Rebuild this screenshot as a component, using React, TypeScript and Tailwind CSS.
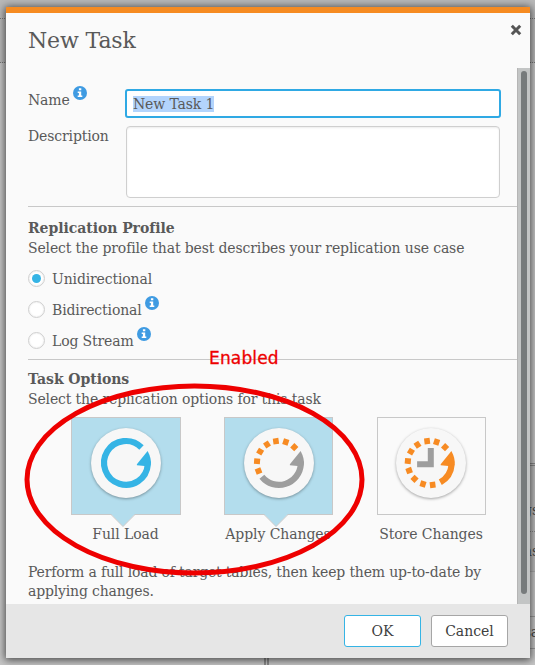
import React from "react";

const INFO_BLUE = "#3f9be2";

function InfoIcon() {
  return (
    <svg width="14" height="14" viewBox="0 0 14 14" className="shrink-0">
      <circle cx="7" cy="7" r="7" fill={INFO_BLUE} />
      <path d="M5.9 2.2h2.4v2H5.9zM4.7 5.4h3.5v4.2h1.1v1.5H4.7V9.6h1.2V6.9H4.7z" fill="#fff" />
    </svg>
  );
}

function Radio({ label, checked, info }: { label: string; checked?: boolean; info?: boolean }) {
  return (
    <div className="flex h-[31px] items-center">
      <span className="flex h-[17px] w-[17px] shrink-0 items-center justify-center rounded-full border border-[#cfcfcf] bg-white shadow-[inset_0_0_2px_rgba(0,0,0,0.12)]">
        {checked && <span className="h-[9px] w-[9px] rounded-full bg-[#35b4e5]" />}
      </span>
      <span className="ml-[7px] leading-[18px]">{label}</span>
      {info && (
        <span className="mb-[13px] ml-[3.5px]">
          <InfoIcon />
        </span>
      )}
    </div>
  );
}

function Dots({ angles }: { angles: number[] }) {
  return (
    <g fill="#f78b23">
      {angles.map((a) => (
        <rect key={a} x="19" y="-2.8" width="6" height="5.6" transform={`rotate(${a})`} />
      ))}
    </g>
  );
}

const ARROW = "M21.6 -11.9L10.9 1.2V2.3L18.6 2.9L24.9 2Q25.6 -4.5 21.6 -11.9Z";

function Disc({ children }: { children: React.ReactNode }) {
  return (
    <span className="flex h-[70px] w-[70px] items-center justify-center rounded-full bg-[#f7f7f7] shadow-[0_1px_3px_rgba(0,0,0,0.35)]">
      <svg width="60" height="60" viewBox="-30 -30 60 60">
        {children}
      </svg>
    </span>
  );
}

function FullLoadIcon() {
  return (
    <Disc>
      <path d="M15.5 -15.5A21.9 21.9 0 1 0 21.8 1.5" fill="none" stroke="#35b4e5" strokeWidth="6.2" />
      <path d={ARROW} fill="#35b4e5" />
    </Disc>
  );
}

function ApplyIcon() {
  return (
    <Disc>
      <Dots angles={[158.5, 184.5, 211, 237, 262, 288, 314]} />
      <path d="M-17.1 13.7A21.9 21.9 0 0 0 21.8 1.5" fill="none" stroke="#9e9e9e" strokeWidth="6.2" />
      <path d={ARROW} fill="#9e9e9e" />
    </Disc>
  );
}

function StoreIcon() {
  return (
    <Disc>
      <g transform="translate(-1.2 0)">
        <Dots angles={[-46, -72, -97, -124, -149, -175, 160, 134, 108, 82.5]} />
        <path d="M10.5 19.2A21.9 21.9 0 0 0 21.8 1.5" fill="none" stroke="#f78b23" strokeWidth="6.2" />
        <path d={ARROW} fill="#f78b23" />
        <path d="M-2 -15H4V4.3H-12.7V-1.7H-2Z" fill="#9e9e9e" />
      </g>
    </Disc>
  );
}

function Tile({ label, active, children }: { label: string; active?: boolean; children: React.ReactNode }) {
  return (
    <div className="flex w-[109px] flex-col items-center first:w-[110px] last:ml-px">
      <div
        className={
          "relative flex h-[98px] w-full justify-center border border-[#c8c8c8] pt-[10px] " +
          (active ? "bg-[#b3dded]" : "bg-[#fafafa] pr-px")
        }
      >
        {children}
        {active && (
          <svg className="absolute left-[38px] top-[96px]" width="26" height="14" viewBox="0 0 26 14">
            <path d="M1 0L13 12.5L25 0Z" fill="#b3dded" />
            <path d="M1 .5L13 12.5L25 .5" fill="none" stroke="#c8c8c8" />
          </svg>
        )}
      </div>
      <span className="mr-px mt-[10px] whitespace-nowrap leading-[18px] tracking-[-0.08px]">{label}</span>
    </div>
  );
}

/* Page behind the modal, dimmed */
function Backdrop() {
  return (
    <div className="absolute inset-0 flex flex-col overflow-hidden bg-[#c6c6c6] text-[#4a4a4a]">
      <div className="h-[19px] shrink-0 border-b border-dotted border-[#777] bg-[#b9b9b9]" />
      <div className="h-[44px] shrink-0 border-b border-dotted border-[#777] bg-[#b9b9b9]" />
      <div className="h-[400px] shrink-0" />
      <div className="ml-auto flex w-[271px] grow flex-col border-l-[5px] border-double border-[#8a8a8a]">
        <div className="flex h-[69px] items-end justify-end border-b border-dotted border-[#888] bg-[#bdbdbd] pb-[10px] [border-top:3px_double_#898989]">
          <span className="-mr-[4px]">gs</span>
        </div>
        <div className="flex h-[40px] items-center justify-end border-b border-[#aaa] bg-[#bdbdbd]">
          <span className="-mr-[4px]">ns</span>
        </div>
        <div className="h-[44px]" />
        <div className="flex h-[33px] items-center justify-end border-y border-[#999]">
          <span className="-mr-[4px]">sa</span>
        </div>
      </div>
    </div>
  );
}

export default function App() {
  return (
    <div className="relative h-[665px] w-[535px] overflow-hidden font-['DejaVu_Serif',serif] text-[14px] tracking-[-0.135px] text-[#595959]">
      <Backdrop />
      <div className="relative ml-[6px] pt-[7px]">
        <div className="flex h-[651px] w-[524px] flex-col border-t-[6px] border-[#f68b21] bg-[#fafafa] shadow-[0_1px_8px_1px_rgba(0,0,0,0.65)]">
          <header className="flex h-[55px] shrink-0 items-start justify-between pl-[22px] pr-[8px]">
            <h1 className="mt-[13px] text-[22px] leading-[30px]">New Task</h1>
            <svg className="mt-[11px]" width="12" height="12" viewBox="0 0 12 12">
              <path d="M1.8 1.8L10.2 10.2M10.2 1.8L1.8 10.2" stroke="#555" strokeWidth="3" />
            </svg>
          </header>

          <div className="flex h-[536px] shrink-0">
            <main className="w-[511px] pl-[22px]">
              <div className="flex pt-[21px]">
                <label className="flex h-[22px] w-[97px] items-start">
                  <span className="mt-[1px] leading-[20px]">Name</span>
                  <span className="-mt-[3px] ml-[3.5px]">
                    <InfoIcon />
                  </span>
                </label>
                <div className="flex h-[29px] w-[376px] items-center rounded-[3px] border-2 border-[#2fa9e4] bg-white pl-[6px]">
                  <span className="bg-[#b3d4fc] leading-[16px]">New Task 1</span>
                </div>
              </div>
              <div className="flex pt-[8px]">
                <label className="w-[98px] leading-[20px]">Description</label>
                <div className="h-[72px] w-[374px] rounded-[4px] border border-[#cfcfcf] bg-white shadow-[inset_0_1px_2px_rgba(0,0,0,0.08)]" />
              </div>

              <section className="mt-[8px] border-t border-[#c8c8c8] pt-[12px]">
                <h2 className="font-bold leading-[18px] tracking-[-0.05px]">Replication Profile</h2>
                <p className="mt-px leading-[20px]">
                  Select the profile that best describes your replication use case
                </p>
                <div className="pt-[5px]">
                  <Radio label="Unidirectional" checked />
                  <Radio label="Bidirectional" info />
                  <Radio label="Log Stream" info />
                </div>
              </section>

              <section className="mt-[3px] border-t border-[#c8c8c8] pt-[9px]">
                <h2 className="font-bold leading-[20px] tracking-[-0.05px]">Task Options</h2>
                <p className="leading-[20px]">Select the replication options for this task</p>
                <div className="flex gap-[43px] pl-[43px] pt-[8px]">
                  <Tile label="Full Load" active>
                    <FullLoadIcon />
                  </Tile>
                  <Tile label="Apply Changes" active>
                    <ApplyIcon />
                  </Tile>
                  <Tile label="Store Changes">
                    <StoreIcon />
                  </Tile>
                </div>
                <p className="mt-[20px] leading-[19px] tracking-[-0.17px]">
                  Perform a full load of target tables, then keep them up-to-date by
                  <br />
                  applying changes.
                </p>
              </section>
            </main>
            <div className="flex w-[13px] justify-center border-l border-[#b5b5b5] bg-[#c3c5c5] pt-[3px]">
              <div className="mr-px h-[523px] w-[6px] rounded-full bg-[#777b7c]" />
            </div>
          </div>

          <footer className="flex grow items-start justify-end gap-[10px] bg-[#e6e6e6] pr-[22px] pt-[11px] text-[#404040]">
            <button className="h-[32px] w-[77px] rounded-[3px] border border-[#35b4e5] bg-white tracking-normal">OK</button>
            <button className="h-[32px] w-[77px] rounded-[3px] border border-[#a6a6a6] bg-white tracking-normal">Cancel</button>
          </footer>
        </div>
      </div>

      {/* Callout drawn over the options */}
      <svg className="absolute inset-0" width="535" height="665" viewBox="0 0 535 665">
        <ellipse cx="194.5" cy="479.5" rx="167.5" ry="93.5" fill="none" stroke="#ee0000" strokeWidth="5" />
      </svg>
      <span className="absolute left-[209px] top-[348px] font-['DejaVu_Sans',sans-serif] text-[17px] leading-[20px] tracking-[0.15px] text-[#ee0000] [-webkit-text-stroke:0.3px_#ee0000]">
        Enabled
      </span>
    </div>
  );
}
